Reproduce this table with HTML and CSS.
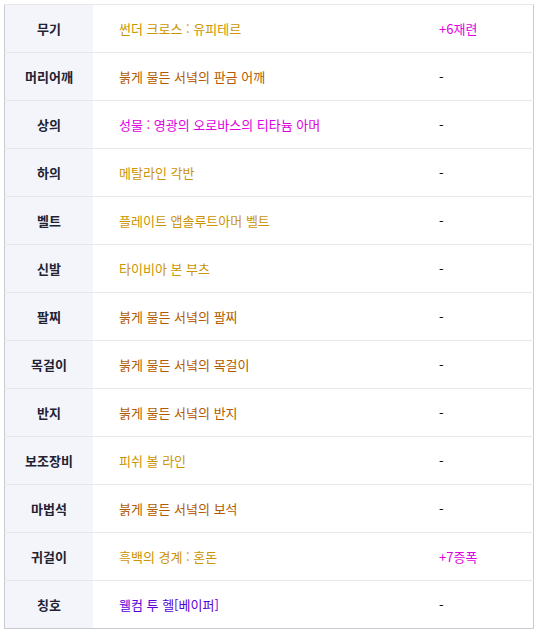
FILE: index.html
```html
<!DOCTYPE html>
<html lang="ko">
<head>
<meta charset="UTF-8">
<title>장비</title>
<link rel="stylesheet" href="styles.css">
</head>
<body>
<table class="equip-table">
    <tr><th>무기</th><td class="name gold">썬더 크로스 : 유피테르</td><td class="extra pink">+6재련</td></tr>
    <tr><th>머리어깨</th><td class="name brown">붉게 물든 서녘의 판금 어깨</td><td class="extra">-</td></tr>
    <tr><th>상의</th><td class="name pink">성물 : 영광의 오로바스의 티타늄 아머</td><td class="extra">-</td></tr>
    <tr><th>하의</th><td class="name gold">메탈라인 각반</td><td class="extra">-</td></tr>
    <tr><th>벨트</th><td class="name gold">플레이트 앱솔루트아머 벨트</td><td class="extra">-</td></tr>
    <tr><th>신발</th><td class="name gold">타이비아 본 부츠</td><td class="extra">-</td></tr>
    <tr><th>팔찌</th><td class="name brown">붉게 물든 서녘의 팔찌</td><td class="extra">-</td></tr>
    <tr><th>목걸이</th><td class="name brown">붉게 물든 서녘의 목걸이</td><td class="extra">-</td></tr>
    <tr><th>반지</th><td class="name brown">붉게 물든 서녘의 반지</td><td class="extra">-</td></tr>
    <tr><th>보조장비</th><td class="name gold">피쉬 볼 라인</td><td class="extra">-</td></tr>
    <tr><th>마법석</th><td class="name brown">붉게 물든 서녘의 보석</td><td class="extra">-</td></tr>
    <tr><th>귀걸이</th><td class="name gold">흑백의 경계 : 혼돈</td><td class="extra pink">+7증폭</td></tr>
    <tr><th>칭호</th><td class="name purple">웰컴 투 헬[베이퍼]</td><td class="extra">-</td></tr>
</table>
</body>
</html>
```
FILE: styles.css
```css
body {
    margin: 4px;
    background-color: #fff;
    font-family: "Noto Sans CJK KR", "Noto Sans", sans-serif;
    font-size: 13px;
}

.equip-table {
    width: 530px;
    border-collapse: collapse;
    border: 1px solid #c9c9d1;
}

.equip-table tr {
    height: 48px;
}

.equip-table th,
.equip-table td {
    border-top: 1px solid #e6e6eb;
    padding: 0;
    vertical-align: middle;
}

.equip-table th {
    width: 88px;
    background-color: #f4f5fa;
    color: #222233;
    font-weight: bold;
    text-align: center;
}

.name {
    padding-left: 26px !important;
    width: 320px;
}

.extra {
    color: #000;
}

.gold {
    color: #cc9400;
}

.brown {
    color: #b35a00;
}

.pink {
    color: #e000e0;
}

.purple {
    color: #5a00d8;
}
```
